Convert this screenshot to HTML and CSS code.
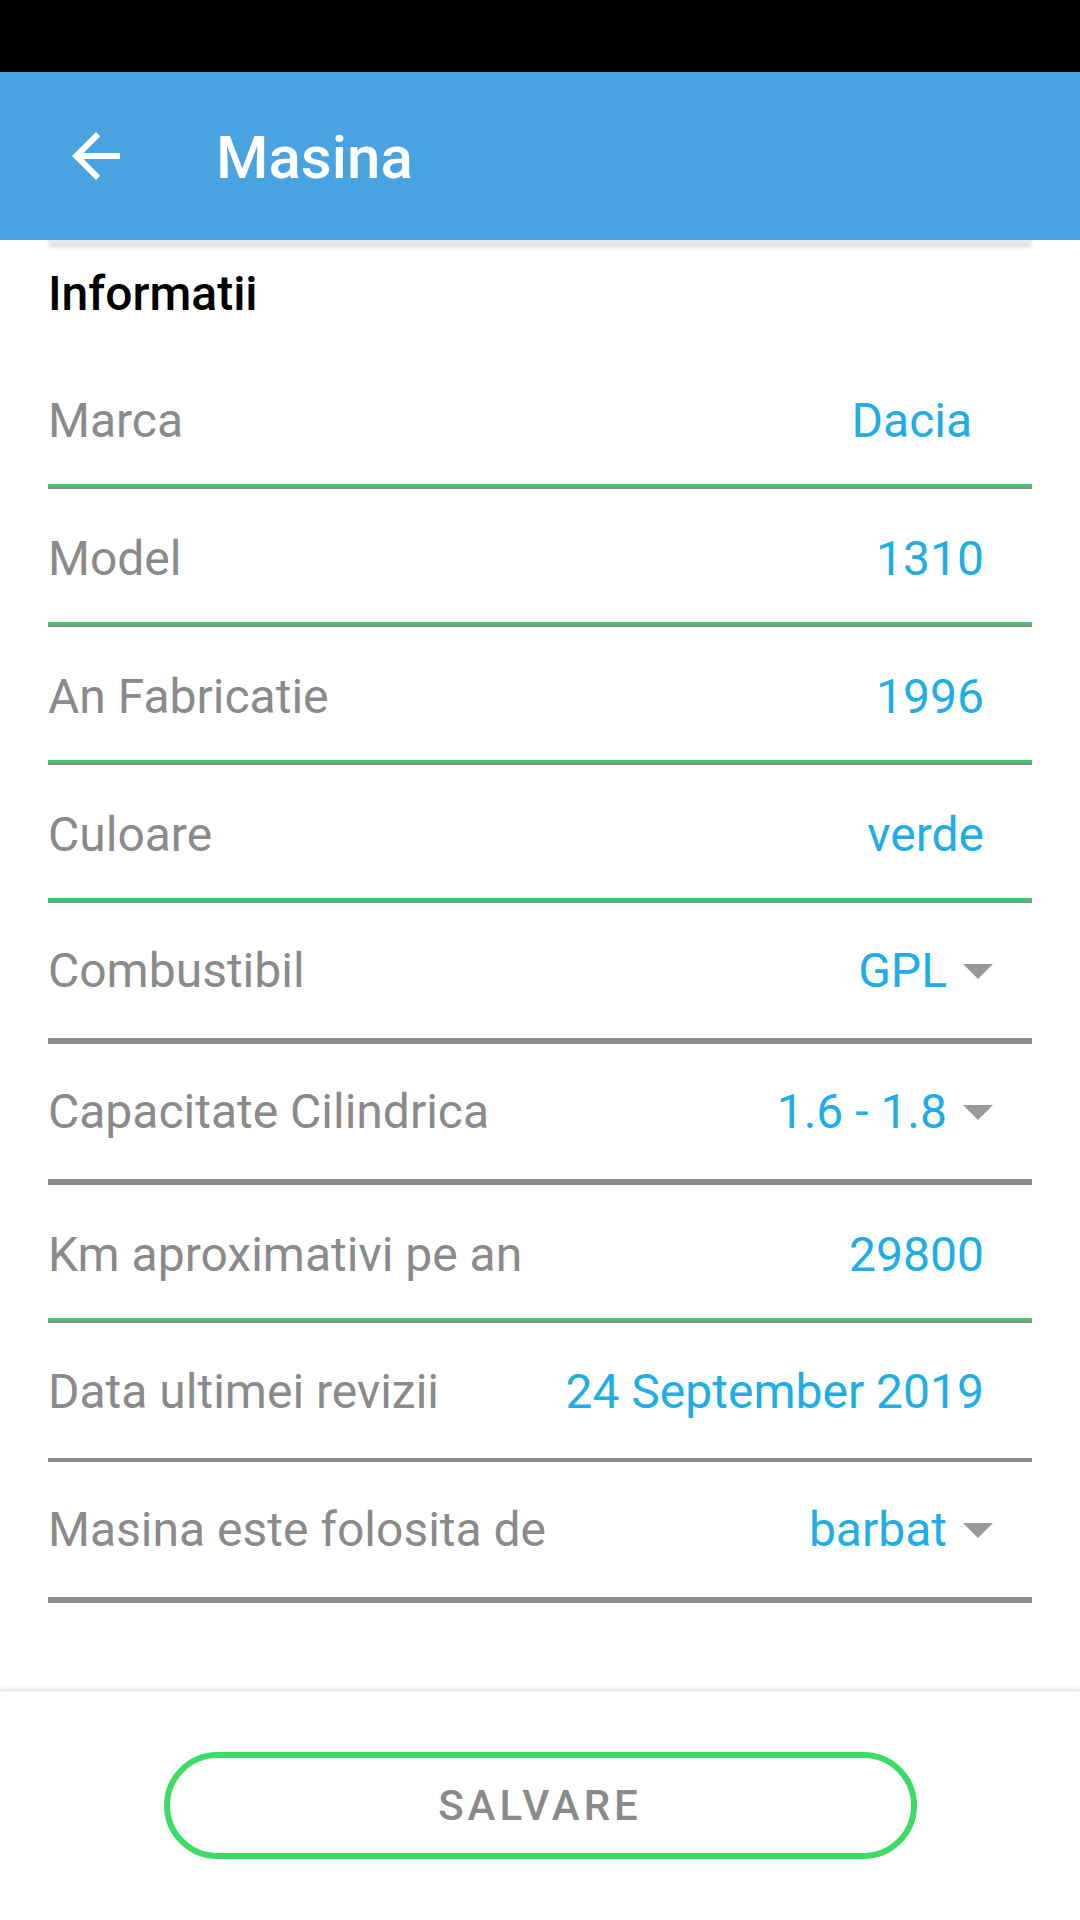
FILE: index.html
```
<!DOCTYPE html>
<html lang="ro">
<head>
    <meta charset="UTF-8">
    <meta name="viewport" content="width=device-width, initial-scale=1.0">
    <title>Masina</title>
    <link rel="stylesheet" href="styles.css">
</head>
<body>
    <!-- Bara de status -->
    <div class="status-bar"></div>

    <!-- Bara de sus -->
    <header class="app-bar">
        <svg class="back-icon" viewBox="0 0 24 24" width="72" height="72">
            <path d="M20 11H7.83l5.59-5.59L12 4l-8 8 8 8 1.41-1.41L7.83 13H20v-2z" fill="#fff"/>
        </svg>
        <h1 class="app-title">Masina</h1>
    </header>

    <!-- Continut -->
    <main class="content">
        <div class="card-tail"></div>

        <section class="section">
            <h2 class="section-title">Informatii</h2>

            <div class="field field-input">
                <span class="field-label">Marca</span>
                <span class="field-value">Dacia&nbsp;</span>
            </div>
            <div class="field field-input">
                <span class="field-label">Model</span>
                <span class="field-value">1310</span>
            </div>
            <div class="field field-input">
                <span class="field-label">An Fabricatie</span>
                <span class="field-value">1996</span>
            </div>
            <div class="field field-input">
                <span class="field-label">Culoare</span>
                <span class="field-value">verde</span>
            </div>
            <div class="field field-select">
                <span class="field-label">Combustibil</span>
                <span class="field-value">GPL
                    <svg class="drop-icon" viewBox="7 10 10 5" width="30" height="15"><path d="M7 10l5 5 5-5z"/></svg>
                </span>
            </div>
            <div class="field field-select">
                <span class="field-label">Capacitate Cilindrica</span>
                <span class="field-value">1.6 - 1.8
                    <svg class="drop-icon" viewBox="7 10 10 5" width="30" height="15"><path d="M7 10l5 5 5-5z"/></svg>
                </span>
            </div>
            <div class="field field-input">
                <span class="field-label">Km aproximativi pe an</span>
                <span class="field-value">29800</span>
            </div>
            <div class="field field-date">
                <span class="field-label">Data ultimei revizii</span>
                <span class="field-value">24 September 2019</span>
            </div>
            <div class="field field-select">
                <span class="field-label">Masina este folosita de</span>
                <span class="field-value">barbat
                    <svg class="drop-icon" viewBox="7 10 10 5" width="30" height="15"><path d="M7 10l5 5 5-5z"/></svg>
                </span>
            </div>
        </section>
    </main>

    <!-- Bara de jos cu butonul de salvare -->
    <footer class="bottom-bar">
        <button class="save-button">SALVARE</button>
    </footer>
</body>
</html>
```

FILE: styles.css
```
body {
    margin: 0;
    width: 1080px;
    height: 1920px;
    overflow: hidden;
    background-color: #fff;
    font-family: Roboto, "Liberation Sans", sans-serif;
}

/* Bara de status */
.status-bar {
    height: 72px;
    background-color: #000;
}

/* Bara de sus */
.app-bar {
    display: flex;
    align-items: center;
    height: 168px;
    background-color: #49a3e1;
    position: relative;
    z-index: 2;
}

.back-icon {
    margin-left: 60px;
    flex-shrink: 0;
}

.app-title {
    margin: 0 0 0 84px;
    padding-top: 3px;
    font-size: 60px;
    line-height: 70px;
    font-weight: 500;
    color: #fff;
}

/* Marginea cardului de deasupra, ascunsa sub bara */
.card-tail {
    height: 3px;
    margin: 0 48px;
    background-color: #e6e6e6;
    border-radius: 0 0 6px 6px;
    box-shadow: 0 3px 5px rgba(0, 0, 0, 0.28);
}

.section {
    padding: 0 48px;
}

.section-title {
    margin: 23px 0 29px;
    font-size: 48px;
    line-height: 56px;
    font-weight: 500;
    color: #000;
}

/* Randuri */
.field {
    display: flex;
    justify-content: space-between;
    align-items: flex-start;
    box-sizing: border-box;
    font-size: 48px;
    line-height: 56px;
}

.field-label {
    color: #8a8a8a;
}

.field-value {
    display: flex;
    align-items: center;
    color: #1eade5;
    white-space: pre;
}

.field-input {
    height: 138px;
    padding-top: 42px;
    border-bottom: 2px solid #8c8c8c;
    box-shadow: inset 0 -3px 0 #3fc96c;
}

.field-input .field-value {
    padding-right: 48px;
}

.field-select {
    height: 141px;
    padding-top: 40px;
    border-bottom: 6px solid #8c8c8c;
}

.field-select .field-value {
    white-space: nowrap;
}

.drop-icon {
    margin: 0 39px 0 16px;
    fill: #999;
}

.field-date {
    height: 139px;
    padding-top: 41px;
    border-bottom: 4px solid #8c8c8c;
}

.field-date .field-value {
    padding-right: 48px;
}

/* Bara de jos */
.bottom-bar {
    position: fixed;
    left: 0;
    right: 0;
    bottom: 0;
    height: 229px;
    display: flex;
    justify-content: center;
    align-items: center;
    background-color: #fff;
    border-top: 1px solid #e4e4e4;
    box-shadow: 0 -2px 4px rgba(0, 0, 0, 0.08);
}

.save-button {
    width: 753px;
    height: 107px;
    background-color: #fff;
    border: 6px solid #3bdb66;
    border-radius: 54px;
    font-family: Roboto, "Liberation Sans", sans-serif;
    font-size: 42px;
    font-weight: 500;
    letter-spacing: 4px;
    color: #8a8a8a;
    cursor: pointer;
}
```
